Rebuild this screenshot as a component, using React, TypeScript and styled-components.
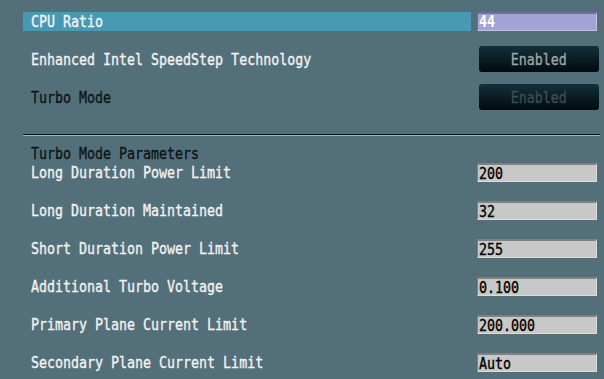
import React from "react";
import styled, { createGlobalStyle } from "styled-components";

const Global = createGlobalStyle`
  html, body { margin: 0; padding: 0; background: #53707a; }
  body { width: 604px; height: 379px; overflow: hidden; }
`;

const Page = styled.div`
  width: 604px;
  height: 379px;
  box-sizing: border-box;
  padding: 2px 0 0 23px;
  background: #53707a;
  font-family: "DejaVu Sans Mono", "Liberation Mono", monospace;
  font-size: 16px;
  line-height: 19px;
`;

const Section = styled.div<{ $gap?: number }>`
  display: flex;
  flex-direction: column;
  gap: ${(p) => p.$gap ?? 0}px;
`;

const Row = styled.div<{ $h: number }>`
  display: flex;
  align-items: center;
  height: ${(p) => p.$h}px;
  gap: 6px;
`;

const LabelCell = styled.div<{ $selected?: boolean }>`
  width: 448px;
  height: 19px;
  box-sizing: border-box;
  padding-left: 8px;
  display: flex;
  align-items: center;
  background: ${(p) => (p.$selected ? "#4899b3" : "transparent")};
`;

const Txt = styled.span<{ $color: string; $bold?: boolean; $origin?: string }>`
  display: inline-block;
  white-space: nowrap;
  color: ${(p) => p.$color};
  font-weight: ${(p) => (p.$bold ? 700 : 400)};
  transform: scaleX(0.831);
  transform-origin: ${(p) => p.$origin ?? "left"} center;
  line-height: 19px;
  -webkit-text-stroke: ${(p) => (p.$bold ? "0" : "0.35px")} currentColor;
`;

const ValueBox = styled.div<{ $tone: "lavender" | "gray" }>`
  width: 120px;
  height: 19px;
  box-sizing: border-box;
  padding-left: 1px;
  display: flex;
  align-items: center;
  background: ${(p) => (p.$tone === "lavender" ? "#a3a3d6" : "#c8c8c8")};
  border-top: 2px solid ${(p) => (p.$tone === "lavender" ? "#6e6e9c" : "#808080")};
  border-left: 1px solid ${(p) => (p.$tone === "lavender" ? "#6e6e9c" : "#808080")};
  border-right: 1px solid ${(p) => (p.$tone === "lavender" ? "#c4c4dc" : "#dcdcdc")};
  border-bottom: 1px solid ${(p) => (p.$tone === "lavender" ? "#c4c4dc" : "#dcdcdc")};
`;

const ToggleButton = styled.div`
  width: 120px;
  height: 26px;
  margin-left: 2px;
  border-radius: 3px;
  background: linear-gradient(#13303a, #020a0e);
  display: flex;
  align-items: center;
  justify-content: center;
`;

const Divider = styled.div`
  margin-top: 18px;
  width: 577px;
  height: 0;
  border-top: 1px solid #0b1518;
  border-bottom: 1px solid #a9b6ba;
`;

const Heading = styled.div`
  margin-top: 8px;
  padding-left: 8px;
  height: 19px;
`;

const params: [string, string][] = [
  ["Long Duration Power Limit", "200"],
  ["Long Duration Maintained", "32"],
  ["Short Duration Power Limit", "255"],
  ["Additional Turbo Voltage", "0.100"],
  ["Primary Plane Current Limit", "200.000"],
  ["Secondary Plane Current Limit", "Auto"],
];

export default function App() {
  return (
    <>
      <Global />
      <Page>
        <Section>
          <Row $h={38}>
            <LabelCell $selected>
              <Txt $color="#f4f4f4">CPU Ratio</Txt>
            </LabelCell>
            <ValueBox $tone="lavender">
              <Txt $color="#ffffff" $bold>44</Txt>
            </ValueBox>
          </Row>
          <Row $h={38}>
            <LabelCell>
              <Txt $color="#f2f2f2">Enhanced Intel SpeedStep Technology</Txt>
            </LabelCell>
            <ToggleButton>
              <Txt $color="#9ea4a4" $origin="center">Enabled</Txt>
            </ToggleButton>
          </Row>
          <Row $h={38}>
            <LabelCell>
              <Txt $color="#0e1416">Turbo Mode</Txt>
            </LabelCell>
            <ToggleButton>
              <Txt $color="#3a4d54" $origin="center">Enabled</Txt>
            </ToggleButton>
          </Row>
        </Section>
        <Divider />
        <Heading>
          <Txt $color="#0e1416">Turbo Mode Parameters</Txt>
        </Heading>
        <Section $gap={19}>
          {params.map(([label, value]) => (
            <Row $h={19} key={label}>
              <LabelCell>
                <Txt $color="#f2f2f2">{label}</Txt>
              </LabelCell>
              <ValueBox $tone="gray">
                <Txt $color="#000000">{value}</Txt>
              </ValueBox>
            </Row>
          ))}
        </Section>
      </Page>
    </>
  );
}
